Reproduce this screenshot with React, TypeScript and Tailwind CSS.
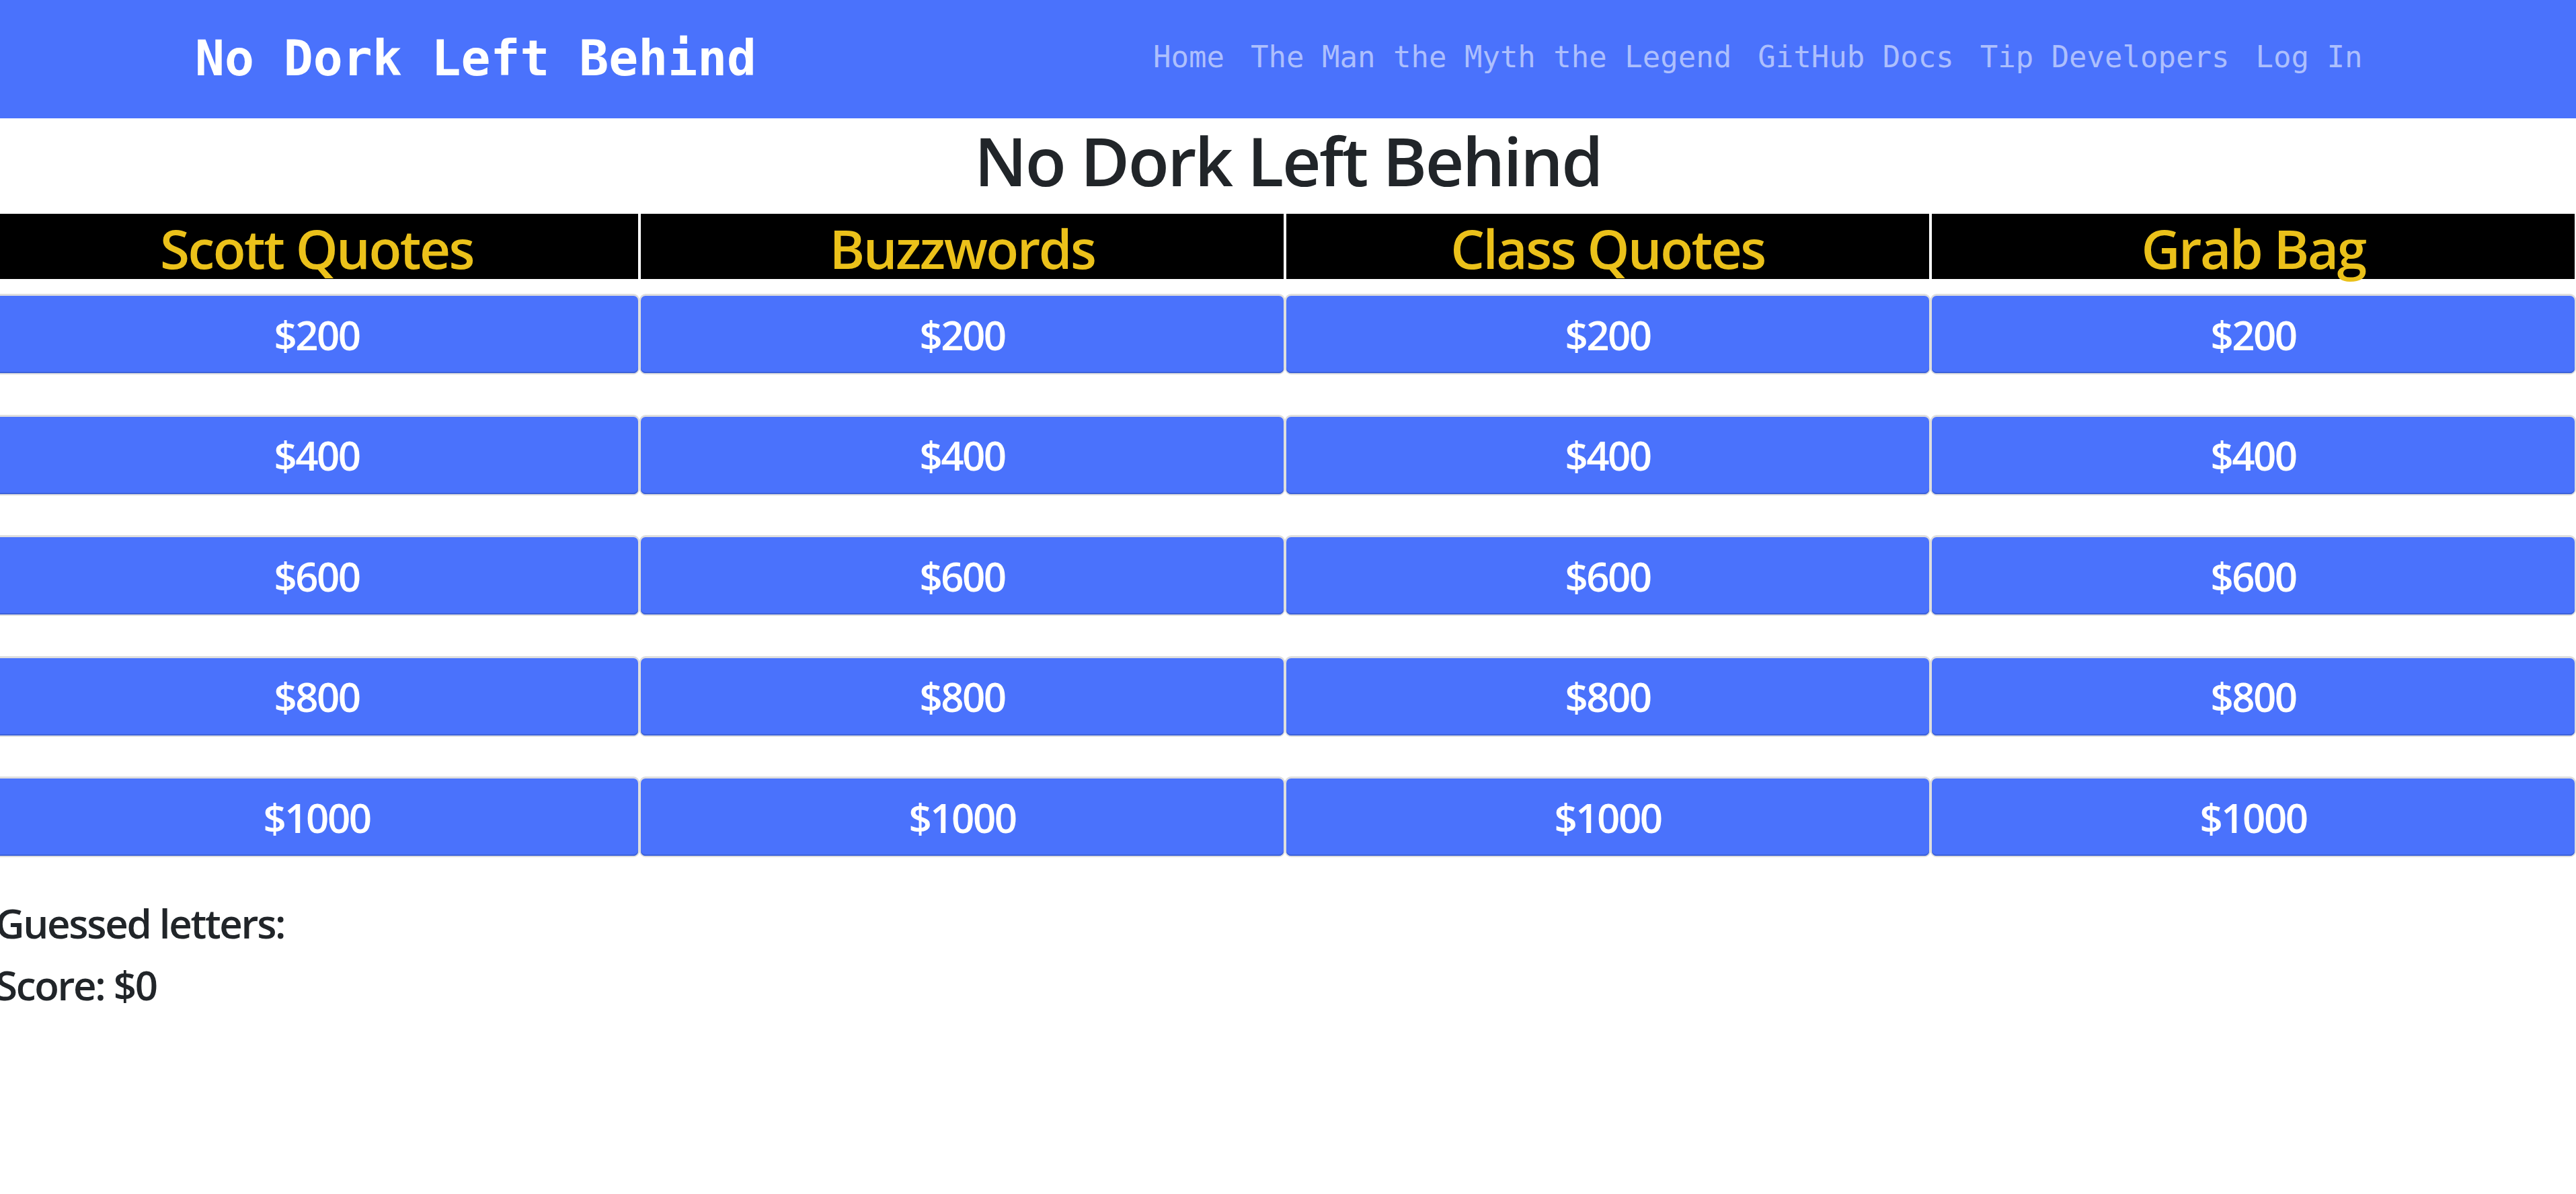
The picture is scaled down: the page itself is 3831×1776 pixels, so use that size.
import React from "react";

const categories = ["Scott Quotes", "Buzzwords", "Class Quotes", "Grab Bag"];
const values = [200, 400, 600, 800, 1000];
const links = ["Home", "The Man the Myth the Legend", "GitHub Docs", "Tip Developers", "Log In"];

export default function App() {
  return (
    <div className="min-h-screen w-full overflow-hidden bg-white text-[#212529] [font-family:'Open_Sans',sans-serif]">
      <nav className="flex h-[176px] items-center justify-between bg-[#4a72fc] pl-[290px] pr-[298px]">
        <a className="mb-[4px] text-[73px] font-bold leading-none text-white [font-family:'DejaVu_Sans_Mono',monospace]">
          No Dork Left Behind
        </a>
        <ul className="mb-[6px] flex items-center [font-family:'DejaVu_Sans_Mono',monospace]">
          {links.map((l) => (
            <li key={l} className="px-[19.5px] text-[44px] leading-none text-[#adbffd] whitespace-pre">
              {l}
            </li>
          ))}
        </ul>
      </nav>

      <h1 className="h-[142px] text-center text-[100px] font-semibold leading-[124px] tracking-[-2.5px]">
        No Dork Left Behind
      </h1>

      <div className="ml-[-7px] w-[3836px]">
        <div className="grid grid-cols-[repeat(4,956px)] gap-x-[4px]">
          {categories.map((c) => (
            <div
              key={c}
              className="h-[97px] bg-black text-center text-[80px] font-semibold leading-[102px] tracking-[-2.5px] text-[#ebc11a] whitespace-nowrap"
            >
              {c}
            </div>
          ))}
        </div>

        <div className="mt-[25px] grid grid-cols-[repeat(4,956px)] gap-x-[4px] gap-y-[64.5px]">
          {values.map((v) =>
            categories.map((c) => (
              <button
                key={c + v}
                className="flex h-[115px] items-center justify-center rounded-[7px] bg-[#4a72fc] text-[60px] font-semibold leading-none tracking-[-2.5px] text-white shadow-[inset_0_-2px_0_#3d62d9,0_0_0_2px_#dedede,0_-1px_0_2px_#dedede]"
              >
                ${v}
              </button>
            ))
          )}
        </div>

        <div className="mt-[54px] text-[60px] font-semibold leading-[92px] tracking-[-2.3px]">
          <div>Guessed letters:</div>
          <div>Score: $0</div>
        </div>
      </div>
    </div>
  );
}
